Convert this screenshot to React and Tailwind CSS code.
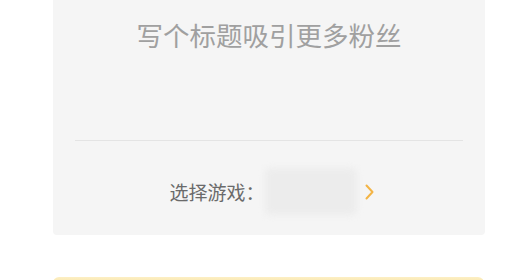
import React from "react";

const ChevronRight = () => (
  <svg width="11" height="16" viewBox="0 0 11 16" fill="none">
    <path d="M2.5 1.5L8.5 8L2.5 14.5" stroke="#f3b445" strokeWidth="2" strokeLinecap="round" strokeLinejoin="round" />
  </svg>
);

export default function App() {
  return (
    <div
      className="w-[510px] h-[280px] overflow-hidden bg-white"
      style={{ fontFamily: '"Noto Sans CJK SC", "Noto Sans", sans-serif' }}
    >
      {/* title + game picker card */}
      <div className="ml-[53px] w-[432px] h-[235px] bg-[#f5f5f5] rounded-b-[4px] flex flex-col">
        <div className="pt-[18px] text-center text-[26.5px] leading-[34px] text-[#a0a0a0]">
          写个标题吸引更多粉丝
        </div>

        <div className="mt-[88px] mx-[22px] h-px bg-[#e4e4e4]" />

        <div className="mt-[27px] h-[47px] flex items-center justify-center pl-[6px]">
          <span className="text-[19px] leading-[24px] text-[#6a6a6a]">选择游戏：</span>
          <div className="w-[92px] h-[47px] rounded-[6px] bg-[#ececec] blur-[3px]" />
          <span className="ml-[7px] flex items-center">
            <ChevronRight />
          </span>
        </div>
      </div>

      {/* publish button, only its top edge shows */}
      <div className="mt-[42px] ml-[53px] w-[431px] h-[44px] rounded-[6px] bg-gradient-to-b from-[#fcefc4] via-[#f3cd5c] to-[#f2c94c]" />
    </div>
  );
}
